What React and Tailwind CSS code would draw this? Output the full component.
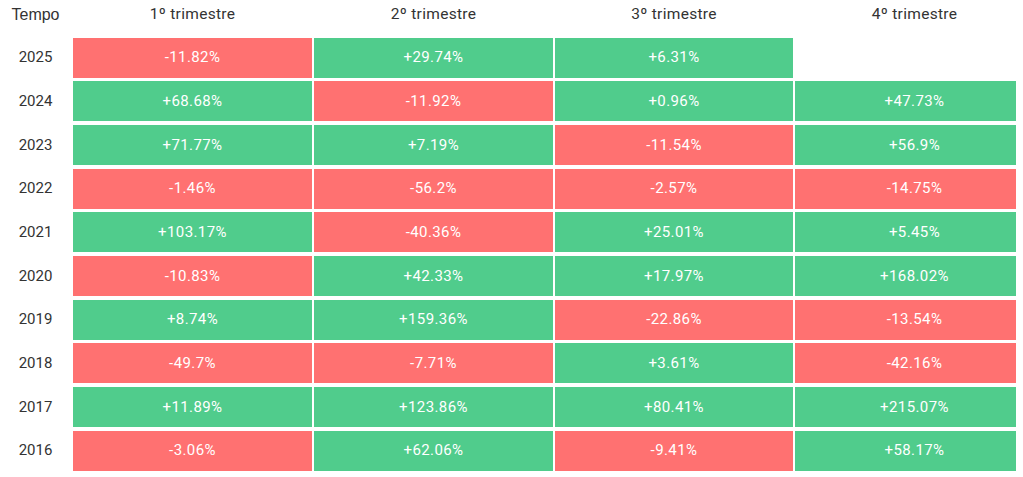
const QUARTERS = ['1º trimestre', '2º trimestre', '3º trimestre', '4º trimestre'];

const ROWS = [
  ['2025', ['-11.82%', '+29.74%', '+6.31%', null]],
  ['2024', ['+68.68%', '-11.92%', '+0.96%', '+47.73%']],
  ['2023', ['+71.77%', '+7.19%', '-11.54%', '+56.9%']],
  ['2022', ['-1.46%', '-56.2%', '-2.57%', '-14.75%']],
  ['2021', ['+103.17%', '-40.36%', '+25.01%', '+5.45%']],
  ['2020', ['-10.83%', '+42.33%', '+17.97%', '+168.02%']],
  ['2019', ['+8.74%', '+159.36%', '-22.86%', '-13.54%']],
  ['2018', ['-49.7%', '-7.71%', '+3.61%', '-42.16%']],
  ['2017', ['+11.89%', '+123.86%', '+80.41%', '+215.07%']],
  ['2016', ['-3.06%', '+62.06%', '-9.41%', '+58.17%']],
];

export default function App() {
  return (
    <div className="w-[1023px] h-[477px] bg-white overflow-hidden">
      <div className="w-[1016px] overflow-hidden">
        <div
          className="grid grid-cols-[71px_239px_239px_238px_239px] gap-x-[2px] gap-y-[3.67px] w-max"
          style={{ fontFamily: 'Roboto, "Noto Sans", sans-serif' }}
        >
          <div
            className="h-[34px] pb-[4px] flex items-center justify-center text-[16px] text-[#333]"
            style={{ fontFamily: '"Liberation Sans", Arial, sans-serif' }}
          >
            Tempo
          </div>
          {QUARTERS.map((q) => (
            <div
              key={q}
              className="h-[34px] pb-[4px] flex items-center justify-center text-[15.5px] text-[#333] tracking-[0.3px]"
            >
              {q}
            </div>
          ))}
          {ROWS.map(([year, vals]) => (
            <Row key={year} year={year} vals={vals} />
          ))}
        </div>
      </div>
    </div>
  );
}

function Row({ year, vals }) {
  return (
    <>
      <div className="h-[40px] flex items-center justify-center text-[15px] text-[#333]">{year}</div>
      {vals.map((v, i) =>
        v == null ? (
          <div key={i} className="h-[40px]" />
        ) : (
          <div
            key={i}
            className={`h-[40px] flex items-center justify-center text-[15px] text-white tracking-[0.4px] ${
              v.startsWith('-') ? 'bg-[#ff7171]' : 'bg-[#50cc8c]'
            }`}
          >
            {v}
          </div>
        ),
      )}
    </>
  );
}
